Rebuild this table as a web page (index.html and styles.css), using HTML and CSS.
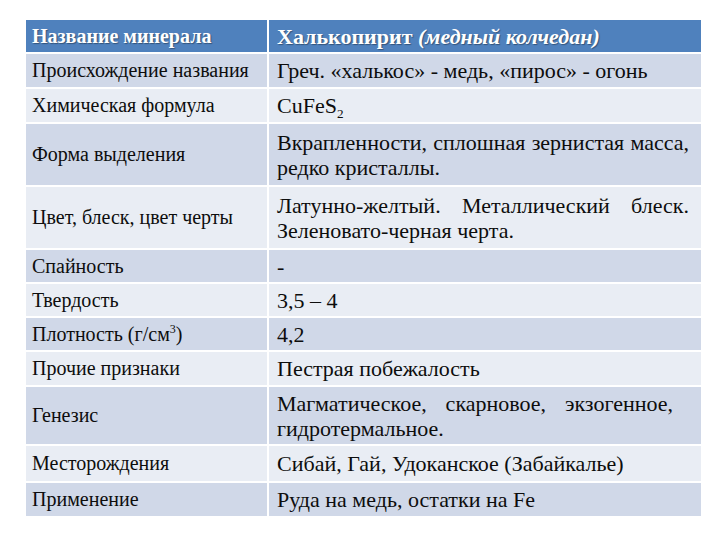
FILE: index.html
```html
<!DOCTYPE html>
<html>
<head>
<meta charset="utf-8">
<link rel="stylesheet" href="styles.css">
</head>
<body>
<table class="mineral">
  <tr class="head">
    <th class="key">Название минерала</th>
    <th class="val">Халькопирит <em>(медный колчедан)</em></th>
  </tr>
  <tr class="odd single">
    <td class="key">Происхождение названия</td>
    <td class="val">Греч. «халькос» - медь, «пирос» - огонь</td>
  </tr>
  <tr class="even single">
    <td class="key">Химическая формула</td>
    <td class="val">CuFeS<sub>2</sub></td>
  </tr>
  <tr class="odd double">
    <td class="key">Форма выделения</td>
    <td class="val">Вкрапленности, сплошная зернистая масса, редко кристаллы.</td>
  </tr>
  <tr class="even double">
    <td class="key">Цвет, блеск, цвет черты</td>
    <td class="val">Латунно-желтый. Металлический блеск. Зеленовато-черная черта.</td>
  </tr>
  <tr class="odd thin">
    <td class="key">Спайность</td>
    <td class="val">-</td>
  </tr>
  <tr class="even thin">
    <td class="key">Твердость</td>
    <td class="val">3,5 – 4</td>
  </tr>
  <tr class="odd thin">
    <td class="key">Плотность (г/см<sup>3</sup>)</td>
    <td class="val">4,2</td>
  </tr>
  <tr class="even single">
    <td class="key">Прочие признаки</td>
    <td class="val">Пестрая побежалость</td>
  </tr>
  <tr class="odd double short">
    <td class="key">Генезис</td>
    <td class="val genesis">Магматическое, скарновое, экзогенное, гидротермальное.</td>
  </tr>
  <tr class="even tall">
    <td class="key">Месторождения</td>
    <td class="val">Сибай, Гай, Удоканское (Забайкалье)</td>
  </tr>
  <tr class="odd single">
    <td class="key">Применение</td>
    <td class="val">Руда на медь, остатки на Fe</td>
  </tr>
</table>
</body>
</html>
```

FILE: styles.css
```css
html, body {
  margin: 0;
  padding: 0;
  background: #ffffff;
}

body {
  padding: 18px 0 0 24px;
  color: #0d0d0d;
}

.mineral {
  border-collapse: collapse;
  width: 679px;
  table-layout: fixed;
}

.mineral th,
.mineral td {
  border: 2px solid #ffffff;
  vertical-align: middle;
  text-align: left;
  padding: 0;
  font-family: "Liberation Serif", "Times New Roman", serif;
}

.mineral .key {
  width: 235px;
  padding-left: 6px;
  font-size: 20px;
}

.mineral .val {
  padding-left: 8px;
  padding-right: 12px;
  font-size: 22px;
  line-height: 25px;
  text-align: justify;
}

.mineral .genesis {
  padding-right: 28px;
}

.head {
  height: 34px;
  background: #4f81bd;
}

.head th {
  color: #ffffff;
  font-weight: bold;
  text-shadow: 1px 1px 1px rgba(0, 0, 0, 0.35);
}

.head em {
  font-style: italic;
}

.odd {
  background: #d0d8e8;
}

.even {
  background: #e9edf4;
}

.single {
  height: 35px;
}

.thin {
  height: 34px;
}

.tall {
  height: 37px;
}

.double {
  height: 63px;
}

.double.short {
  height: 59px;
}

sub, sup {
  font-size: 0.6em;
  line-height: 0;
}
```
